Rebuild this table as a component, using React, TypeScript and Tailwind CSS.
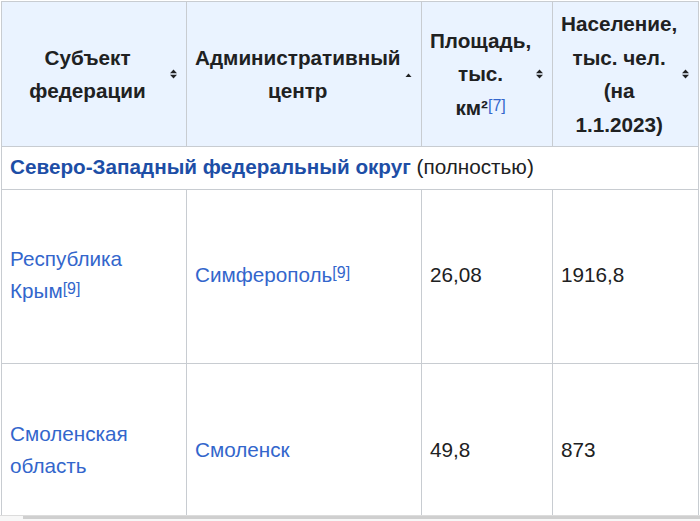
import React from 'react';

interface Region {
  name: string[];
  nameRef?: string;
  center: string;
  centerRef?: string;
  area: string;
  population: string;
  height: string;
}

const regions: Region[] = [
  { name: ['Республика', 'Крым'], nameRef: '9', center: 'Симферополь', centerRef: '9', area: '26,08', population: '1916,8', height: 'h-[174px]' },
  { name: ['Смоленская', 'область'], center: 'Смоленск', area: '49,8', population: '873', height: 'h-[176px]' },
];

const SortBoth = () => (
  <svg width="7" height="10" viewBox="0 0 7 10" className="shrink-0">
    <path d="M0 4.2 L3.5 0.5 L7 4.2 Z M0 5.8 L3.5 9.5 L7 5.8 Z" fill="#202122" />
  </svg>
);

const SortUp = () => (
  <svg width="7" height="10" viewBox="0 0 7 10" className="shrink-0 mt-[5px]">
    <path d="M0.5 5 L3.5 1.5 L6.5 5 Z" fill="#202122" />
  </svg>
);

const Ref: React.FC<{ n: string }> = ({ n }) => (
  <sup className="text-[16px] leading-none text-[#3366cc] relative -top-[4px] font-normal">[{n}]</sup>
);

const HeaderCell: React.FC<{ children: React.ReactNode; up?: boolean }> = ({ children, up }) => (
  <th className="border border-[#c8ccd1] bg-[#eaf3ff] px-[8px] py-[5px] font-bold align-middle">
    <div className="flex items-center">
      <div className="flex-1 text-center">{children}</div>
      <div className="ml-[4px] w-[9px] flex justify-center">{up ? <SortUp /> : <SortBoth />}</div>
    </div>
  </th>
);

export default function App() {
  return (
    <div
      className="w-[700px] h-[521px] bg-white text-[#202122] overflow-hidden"
      style={{ fontFamily: '"Liberation Sans", Arial, sans-serif' }}
    >
      <div className="h-[515px] overflow-hidden pt-px pl-px">
        <table className="table-fixed border-collapse w-[697px] text-[20.7px] leading-[32px]">
          <colgroup>
            <col className="w-[185px]" />
            <col className="w-[235px]" />
            <col className="w-[131px]" />
            <col className="w-[146px]" />
          </colgroup>
          <thead>
            <tr className="h-[144px] leading-[33.6px]">
              <HeaderCell>Субъект<br />федерации</HeaderCell>
              <HeaderCell up>Административный центр</HeaderCell>
              <HeaderCell>
                Площадь,<br />тыс.<br />км²<Ref n="7" />
              </HeaderCell>
              <HeaderCell>
                Население,<br />тыс. чел.<br />(на<br />1.1.2023)
              </HeaderCell>
            </tr>
          </thead>
          <tbody>
            <tr className="h-[43px]">
              <td colSpan={4} className="border border-[#c8ccd1] px-[8px] pb-[2px] align-middle">
                <span className="font-bold text-[#1d4ea6]">Северо-Западный федеральный округ</span> (полностью)
              </td>
            </tr>
            {regions.map((r) => (
              <tr key={r.center} className={r.height}>
                <td className="border border-[#c8ccd1] px-[8px] pb-[3px] align-middle text-[#3366cc]">
                  {r.name[0]}
                  <br />
                  {r.name[1]}
                  {r.nameRef && <Ref n={r.nameRef} />}
                </td>
                <td className="border border-[#c8ccd1] px-[8px] pb-[3px] align-middle text-[#3366cc]">
                  {r.center}
                  {r.centerRef && <Ref n={r.centerRef} />}
                </td>
                <td className="border border-[#c8ccd1] px-[8px] pb-[3px] align-middle">{r.area}</td>
                <td className="border border-[#c8ccd1] px-[8px] pb-[3px] align-middle">{r.population}</td>
              </tr>
            ))}
          </tbody>
        </table>
      </div>
      {/* scrollbar */}
      <div className="h-[6px] border-t border-[#dcdcdc] bg-[#f7f7f7]">
        <div className="ml-[23px] h-[3px] bg-[#cfcfcf]" />
      </div>
    </div>
  );
}
